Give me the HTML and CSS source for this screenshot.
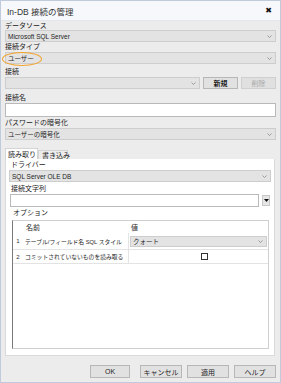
FILE: index.html
```html
<!DOCTYPE html>
<html lang="ja">
<head>
<meta charset="utf-8">
<link rel="stylesheet" href="styles.css">
</head>
<body>
<div class="window">
  <div class="titlebar">
    <span class="title">In-DB 接続の管理</span>
    <span class="close">✖</span>
  </div>
  <div class="body">
    <div class="lbl first">データソース</div>
    <div class="dd"><span>Microsoft SQL Server</span><svg class="chev" width="5" height="3" viewBox="0 0 5 3"><path d="M0.5 0.5 L2.5 2.5 L4.5 0.5" fill="none" stroke="#8a8a8a" stroke-width="0.8"/></svg></div>
    <div class="lbl">接続タイプ</div>
    <div class="dd dd2"><span>ユーザー</span><svg class="chev" width="5" height="3" viewBox="0 0 5 3"><path d="M0.5 0.5 L2.5 2.5 L4.5 0.5" fill="none" stroke="#8a8a8a" stroke-width="0.8"/></svg></div>
    <div class="lbl gap3">接続</div>
    <div class="row3">
      <div class="dd grow"><span></span><svg class="chev" width="5" height="3" viewBox="0 0 5 3"><path d="M0.5 0.5 L2.5 2.5 L4.5 0.5" fill="none" stroke="#8a8a8a" stroke-width="0.8"/></svg></div>
      <div class="btn small">新規</div>
      <div class="btn small disabled">削除</div>
    </div>
    <div class="lbl gap4">接続名</div>
    <div class="input"></div>
    <div class="lbl gap1">パスワードの暗号化</div>
    <div class="dd"><span>ユーザーの暗号化</span><svg class="chev" width="5" height="3" viewBox="0 0 5 3"><path d="M0.5 0.5 L2.5 2.5 L4.5 0.5" fill="none" stroke="#8a8a8a" stroke-width="0.8"/></svg></div>
    <div class="tabs">
      <div class="tab active">読み取り</div>
      <div class="tab">書き込み</div>
    </div>
    <div class="panel">
      <div class="lbl plbl">ドライバー</div>
      <div class="dd"><span>SQL Server OLE DB</span><svg class="chev" width="5" height="3" viewBox="0 0 5 3"><path d="M0.5 0.5 L2.5 2.5 L4.5 0.5" fill="none" stroke="#8a8a8a" stroke-width="0.8"/></svg></div>
      <div class="lbl plbl gap2">接続文字列</div>
      <div class="connrow">
        <div class="input conn"></div>
        <div class="tri"><svg width="5" height="3" viewBox="0 0 5 3"><path d="M0 0 L5 0 L2.5 3 Z" fill="#111"/></svg></div>
      </div>
      <div class="lbl optlbl">オプション</div>
      <div class="grid">
        <div class="grow-row head">
          <div class="num"></div>
          <div class="name">名前</div>
          <div class="val">値</div>
        </div>
        <div class="grow-row r1">
          <div class="num">1</div>
          <div class="name">テーブル/フィールド名 SQL スタイル</div>
          <div class="val"><div class="dd cell"><span>クォート</span><svg class="chev" width="5" height="3" viewBox="0 0 5 3"><path d="M0.5 0.5 L2.5 2.5 L4.5 0.5" fill="none" stroke="#8a8a8a" stroke-width="0.8"/></svg></div></div>
        </div>
        <div class="grow-row r2">
          <div class="num">2</div>
          <div class="name">コミットされていないものを読み取る</div>
          <div class="val center"><span class="check"></span></div>
        </div>
      </div>
    </div>
    <div class="footer">
      <div class="btn fb ok">OK</div>
      <div class="btn fb">キャンセル</div>
      <div class="btn fb">適用</div>
      <div class="btn fb">ヘルプ</div>
    </div>
  </div>
  <div class="highlight"></div>
</div>
</body>
</html>
```

FILE: styles.css
```css
html, body {
  margin: 0;
  padding: 0;
  background: #ebebeb;
}
body {
  font-family: "Liberation Sans", "Noto Sans CJK JP", sans-serif;
  color: #1e1e1e;
}
.window {
  position: relative;
  width: 281px;
  height: 383px;
  box-sizing: border-box;
  border: 1px solid #bfcadb;
  background: #ececec;
  display: flex;
  flex-direction: column;
}
.titlebar {
  height: 20px;
  background: #f6f8fb;
  display: flex;
  align-items: center;
  justify-content: space-between;
  padding: 0 8px 0 6px;
  border-bottom: 1px solid #e2e5ea;
  box-sizing: border-box;
}
.title {
  font-size: 8.5px;
  color: #333;
}
.close {
  font-size: 8px;
  color: #111;
  font-family: "DejaVu Sans", sans-serif;
  font-weight: bold;
}
.body {
  padding: 0 4px;
  display: flex;
  flex-direction: column;
}
.lbl {
  height: 10px;
  line-height: 10px;
  font-size: 7px;
  color: #222;
  white-space: nowrap;
}
.lbl.first { height: 9px; line-height: 10px; }
.gap3 { margin-top: 3px; }
.gap4 { margin-top: 4px; }
.gap1 { margin-top: 1px; }
.gap2 { margin-top: 2px; }
.dd {
  height: 12px;
  box-sizing: border-box;
  border: 1px solid #cdcdcd;
  background: #e3e3e3;
  display: flex;
  align-items: center;
  justify-content: space-between;
  padding: 0 3px 0 2px;
  font-size: 6.5px;
  color: #1e1e1e;
  white-space: nowrap;
}
.dd2 { margin-top: 0; }
.chev { flex: none; }
.row3 {
  display: flex;
  gap: 3px;
}
.row3 .grow { flex: 1; }
.btn {
  box-sizing: border-box;
  border: 1px solid #b7b7b7;
  background: #e1e1e1;
  display: flex;
  align-items: center;
  justify-content: center;
  font-size: 7px;
  color: #1e1e1e;
  white-space: nowrap;
}
.btn.small {
  width: 35px;
  height: 12px;
  font-weight: bold;
}
.btn.disabled {
  color: #a8a8a8;
  border-color: #cfcfcf;
  background: #e0e0e0;
  font-weight: normal;
}
.input {
  height: 14px;
  box-sizing: border-box;
  border: 1px solid #b9b9b9;
  background: #fff;
}
.tabs {
  margin-top: 8px;
  display: flex;
  align-items: flex-end;
  height: 11px;
}
.tab {
  box-sizing: border-box;
  height: 9px;
  padding: 0 3px;
  font-size: 7px;
  line-height: 9px;
  border: 1px solid #d4d4d4;
  border-bottom: none;
  background: #ececec;
  white-space: nowrap;
}
.tab.active {
  height: 11px;
  line-height: 11px;
  background: #fff;
  width: 33px;
  padding: 0 2px;
}
.tab:not(.active) { width: 30px; }
.panel {
  height: 197px;
  box-sizing: border-box;
  background: #fff;
  border: 1px solid #dadada;
  border-top: none;
  margin-right: 1px;
  padding: 1px 3px 0 3px;
  display: flex;
  flex-direction: column;
}
.plbl { padding-left: 2px; }
.connrow {
  display: flex;
  align-items: center;
  height: 13px;
  padding-left: 1px;
}
.input.conn {
  height: 13px;
  width: 249px;
}
.tri {
  margin-left: 3px;
  width: 8px;
  height: 11px;
  box-sizing: border-box;
  border: 1px solid #c8c8c8;
  background: #e6e6e6;
  display: flex;
  align-items: center;
  justify-content: center;
}
.optlbl {
  padding-left: 4px;
  margin-top: 1px;
}
.grid {
  margin: 2px 2px 0 3px;
  height: 129px;
  box-sizing: border-box;
  border: 1px solid #cfcfcf;
  border-left: 1px solid #7a7a7a;
  background: #fff;
}
.grow-row {
  display: flex;
  font-size: 7px;
  white-space: nowrap;
  border-bottom: 1px solid #e3e3e3;
}
.grow-row.head { height: 12px; border-bottom: none; }
.grow-row.r1 { height: 16px; }
.grow-row.r2 { height: 13px; }
.num {
  width: 10px;
  flex: none;
  display: flex;
  align-items: center;
  justify-content: center;
  font-size: 6px;
  color: #333;
}
.name {
  width: 106px;
  flex: none;
  display: flex;
  align-items: center;
  padding-left: 2px;
  box-sizing: border-box;
  border-right: 1px solid #e3e3e3;
  font-size: 5.8px;
  overflow: hidden;
}
.head .name, .head .val { border-right: none; font-size: 7px; }
.head .num, .head .name { border-right: 1px solid transparent; }
.val {
  flex: 1;
  display: flex;
  align-items: center;
  padding-left: 1px;
  padding-right: 1px;
}
.val.center { justify-content: center; padding-left: 12px; }
.dd.cell {
  flex: 1;
  height: 11px;
}
.check {
  width: 7px;
  height: 7px;
  box-sizing: border-box;
  border: 1px solid #333;
  background: #fff;
}
.footer {
  margin-top: 9px;
  display: flex;
  justify-content: flex-end;
  gap: 5px;
}
.btn.fb {
  width: 42px;
  height: 13px;
  font-size: 7px;
}
.btn.ok { margin-right: 5px; width: 40px; }
.highlight {
  position: absolute;
  left: 1px;
  top: 51px;
  width: 40px;
  height: 14px;
  border: 1.6px solid #f2a32a;
  border-radius: 50%;
  box-sizing: border-box;
  pointer-events: none;
}
```
